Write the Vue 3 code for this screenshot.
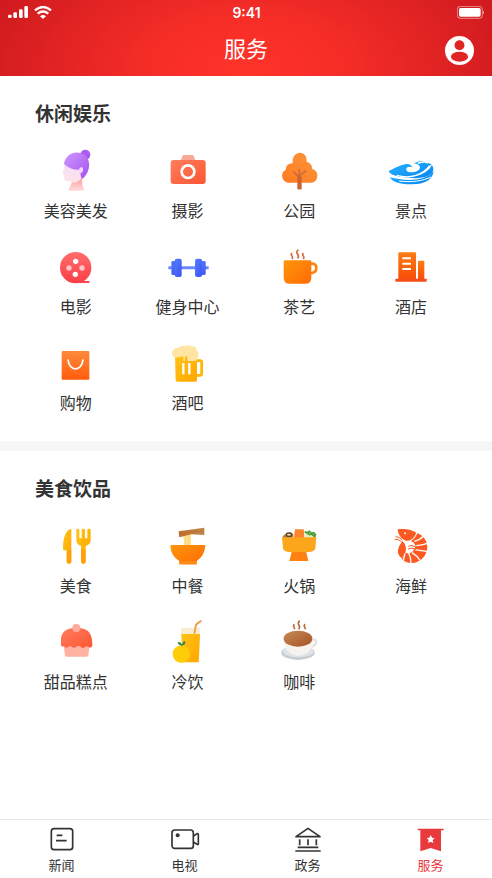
<template>
  <div class="page">
    <header class="header">
      <div class="status-bar">
        <div class="status-left">
          <svg class="signal" viewBox="0 0 60 36" aria-hidden="true">
            <rect x="0" y="26" width="11" height="10" rx="4" />
            <rect x="16" y="19" width="11" height="17" rx="4" />
            <rect x="33" y="10" width="11" height="26" rx="4" />
            <rect x="49" y="0" width="11" height="36" rx="4" />
          </svg>
          <svg class="wifi" viewBox="0 0 54 39" aria-hidden="true">
            <path d="M3 13 Q27 -7 51 13" />
            <path d="M11 23 Q27 10 43 23" />
            <path class="wifi-dot" d="M18 31 Q27 23 36 31 L27 39 Z" />
          </svg>
        </div>
        <span class="time">9:41</span>
        <svg class="battery" viewBox="0 0 84 39" aria-hidden="true">
          <rect class="battery-case" x="1" y="1" width="75" height="36" rx="9" />
          <rect x="6" y="6" width="65" height="26" rx="5" />
          <path d="M79 14 Q84 19 79 24 Z" />
        </svg>
      </div>
      <div class="title-bar">
        <h1 class="title">服务</h1>
        <button class="user-btn" type="button" aria-label="个人中心">
          <svg viewBox="0 0 88 88">
            <circle cx="44" cy="44" r="44" fill="#fff" />
            <circle cx="44" cy="28" r="15" fill="#e02524" />
            <ellipse cx="44" cy="63" rx="26" ry="15" fill="#e02524" />
          </svg>
        </button>
      </div>
    </header>

    <main class="content">
      <section v-for="section in sections" :key="section.title" class="section">
        <h2 class="section-title">{{ section.title }}</h2>
        <div class="grid">
          <a v-for="item in section.items" :key="item.name" class="item" href="#">
            <svg class="item-icon" viewBox="0 0 132 132" aria-hidden="true" v-html="icons[item.icon]"></svg>
            <span class="item-name">{{ item.name }}</span>
          </a>
        </div>
      </section>
    </main>

    <nav class="tab-bar">
      <a v-for="tab in tabs" :key="tab.name" class="tab" :class="{ active: tab.name === current }" href="#" @click.prevent="current = tab.name">
        <svg class="tab-icon" viewBox="0 0 84 84" aria-hidden="true" v-html="tab.icon"></svg>
        <span>{{ tab.name }}</span>
      </a>
    </nav>

    <!-- 图标共用渐变 -->
    <svg class="defs" width="0" height="0" aria-hidden="true">
      <defs>
        <linearGradient id="g-purple" x1="0" y1="0" x2="1" y2="1">
          <stop offset="0" stop-color="#cf98ff" />
          <stop offset="1" stop-color="#a352ee" />
        </linearGradient>
        <linearGradient id="g-skin" x1="0" y1="0" x2="0" y2="1">
          <stop offset="0" stop-color="#f4dcff" />
          <stop offset="1" stop-color="#ffe3e6" />
        </linearGradient>
        <linearGradient id="g-neck" x1="0" y1="0" x2="0" y2="1">
          <stop offset="0" stop-color="#ff9d9d" />
          <stop offset="1" stop-color="#ffdcdc" />
        </linearGradient>
        <linearGradient id="g-coral" x1="0" y1="0" x2="1" y2="1">
          <stop offset="0" stop-color="#ff7e5e" />
          <stop offset="1" stop-color="#fc5531" />
        </linearGradient>
        <linearGradient id="g-tree" x1="1" y1="0" x2="0" y2="1">
          <stop offset="0" stop-color="#fb963e" />
          <stop offset="1" stop-color="#ff7b1f" />
        </linearGradient>
        <linearGradient id="g-wave" x1="0" y1="0" x2="1" y2="1">
          <stop offset="0" stop-color="#27b6ff" />
          <stop offset="1" stop-color="#0883f1" />
        </linearGradient>
        <linearGradient id="g-red" x1="0" y1="0" x2="0" y2="1">
          <stop offset="0" stop-color="#ff6d6b" />
          <stop offset="1" stop-color="#fb3e47" />
        </linearGradient>
        <linearGradient id="g-blue" x1="0" y1="0" x2="1" y2="1">
          <stop offset="0" stop-color="#5380ff" />
          <stop offset="1" stop-color="#3f50f1" />
        </linearGradient>
        <linearGradient id="g-orange" x1="0" y1="0" x2="1" y2="1">
          <stop offset="0" stop-color="#ff960c" />
          <stop offset="1" stop-color="#ff6b05" />
        </linearGradient>
        <linearGradient id="g-hotel" x1="0" y1="0" x2="0" y2="1">
          <stop offset="0" stop-color="#ff7d12" />
          <stop offset="1" stop-color="#f84c09" />
        </linearGradient>
        <linearGradient id="g-bag" x1="0" y1="0" x2="0" y2="1">
          <stop offset="0" stop-color="#ff8a3c" />
          <stop offset="1" stop-color="#ff5c0c" />
        </linearGradient>
        <linearGradient id="g-yellow" x1="0" y1="0" x2="1" y2="1">
          <stop offset="0" stop-color="#ffc315" />
          <stop offset="1" stop-color="#ffa600" />
        </linearGradient>
        <linearGradient id="g-wood" x1="0" y1="0" x2="1" y2="0">
          <stop offset="0" stop-color="#c46a2d" />
          <stop offset="1" stop-color="#be8749" />
        </linearGradient>
        <linearGradient id="g-coffee" x1="0" y1="0" x2="1" y2="1">
          <stop offset="0" stop-color="#c78958" />
          <stop offset="1" stop-color="#a65424" />
        </linearGradient>
      </defs>
    </svg>
  </div>
</template>

<script setup>
import { ref } from 'vue';

const current = ref('服务');

const sections = [
  {
    title: '休闲娱乐',
    items: [
      { name: '美容美发', icon: 'hair' },
      { name: '摄影', icon: 'camera' },
      { name: '公园', icon: 'tree' },
      { name: '景点', icon: 'wave' },
      { name: '电影', icon: 'film' },
      { name: '健身中心', icon: 'gym' },
      { name: '茶艺', icon: 'tea' },
      { name: '酒店', icon: 'hotel' },
      { name: '购物', icon: 'bag' },
      { name: '酒吧', icon: 'beer' }
    ]
  },
  {
    title: '美食饮品',
    items: [
      { name: '美食', icon: 'cutlery' },
      { name: '中餐', icon: 'noodle' },
      { name: '火锅', icon: 'hotpot' },
      { name: '海鲜', icon: 'shrimp' },
      { name: '甜品糕点', icon: 'cake' },
      { name: '冷饮', icon: 'juice' },
      { name: '咖啡', icon: 'coffee' }
    ]
  }
];

const icons = {
  hair: `
    <path d="M54 88 Q55 106 44 120 Q40 125 48 125 Q70 128 92 123 Q82 112 85 86 Z" fill="url(#g-neck)"/>
    <path d="M34 36 Q27 46 30 57 Q30 63 25 72 Q24 76 30 77 Q28 82 31 85 Q29 98 42 97 Q52 96 58 101 Q76 98 84 86 L92 66 L70 40 Z" fill="url(#g-skin)"/>
    <circle cx="94" cy="17" r="15" fill="#ad5cf0"/>
    <path d="M30 44 C34 19 57 5 80 12 C99 18 110 38 104 59 C101 73 93 83 84 90 Q79 82 79 72 Q88 69 87 58 Q82 50 74 62 Q46 62 30 44 Z" fill="url(#g-purple)"/>
    <path d="M76 75 Q89 70 87 58 Q82 51 75 62 Z" fill="#f1d4fb"/>`,
  camera: `
    <path d="M44 36 L49 22 Q50 18 55 18 H78 Q82 18 84 22 L88 36 Z" fill="#f9aa97"/>
    <rect x="14" y="33" width="105" height="72" rx="9" fill="url(#g-coral)"/>
    <circle cx="66" cy="68" r="19" fill="none" stroke="#fff" stroke-width="8"/>`,
  tree: `
    <path d="M33 101 A21 21 0 0 1 26 62 Q28 42 47 43 C44 2 92 2 89 38 Q105 42 106 60 A21 21 0 0 1 102 101 Z" fill="url(#g-tree)"/>
    <path d="M67 121 V61 M67 85 L49 67 M68 80 L87 65" fill="none" stroke="#d0683a" stroke-width="5"/>
    <path d="M61 82 H74 V121 H61 Z" fill="#cb6433"/>`,
  wave: `
    <path d="M-1 66 C18 57 40 44 55 45 Q66 46 70 55 Q61 51 52 57 C49 72 70 73 86 65 C101 57 91 45 75 43 C100 28 135 42 133 61 C131 87 87 91 47 85 C23 82 3 78 -1 66 Z" fill="url(#g-wave)"/>
    <path d="M23 79 C65 91 102 77 122 50 M68 83 C101 78 121 60 127 48 M86 43 Q109 35 118 43" fill="none" stroke="#fff" stroke-width="4"/>
    <path d="M2 85 C48 97 108 98 134 66 C132 91 109 106 68 106 C35 107 10 99 2 85 Z" fill="url(#g-wave)"/>
    <path d="M30 96 C65 101 102 96 126 84" fill="none" stroke="#fff" stroke-width="3"/>`,
  film: `
    <path d="M64 108 H106 V114 H76 Z" fill="#fb4850"/>
    <circle cx="65" cy="68" r="47" fill="url(#g-red)"/>
    <g fill="#fff"><circle cx="65" cy="49" r="8"/><circle cx="64" cy="88" r="8"/></g>
    <g fill="#ffc5c6"><circle cx="45" cy="69" r="8"/><circle cx="84" cy="69" r="8"/></g>`,
  gym: `
    <path d="M7 64 H128 V73 H7 Z" fill="#6b89ff"/>
    <g fill="url(#g-blue)">
      <path d="M16 52 Q16 48 21 48 H28 V90 H21 Q16 90 16 86 Z"/>
      <path d="M119 52 Q119 48 114 48 H106 V90 H114 Q119 90 119 86 Z"/>
      <rect x="26" y="41" width="21" height="55" rx="6"/>
      <rect x="87" y="41" width="21" height="55" rx="6"/>
    </g>`,
  tea: `
    <path d="M100 56 H106 Q118 57 118 69 Q118 84 98 85" fill="none" stroke="#ff8310" stroke-width="8"/>
    <path d="M20 50 Q20 46 25 46 H99 Q103 46 103 50 V98 Q103 116 85 116 H38 Q20 116 20 98 Z" fill="url(#g-orange)"/>
    <path d="M45 24 Q41 29 45 33 Q48 37 45 42 M64 14 Q56 21 62 28 Q67 34 61 40 M79 24 Q75 29 79 33 Q82 37 79 42" fill="none" stroke="#d9683b" stroke-width="5"/>`,
  hotel: `
    <g fill="url(#g-hotel)">
      <path d="M28 25 Q28 22 31 22 H78 Q81 22 81 25 V104 H28 Z"/>
      <path d="M87 50 Q87 47 90 47 H103 Q106 47 106 50 V104 H87 Z"/>
    </g>
    <rect x="19" y="101" width="94" height="9" rx="2" fill="#f34e16"/>
    <path d="M40 40 H66 M40 56 H66 M40 72 H66" stroke="#fff" stroke-width="6"/>`,
  bag: `
    <rect x="23" y="30" width="83" height="86" rx="3" fill="url(#g-bag)"/>
    <path d="M42 55 C45 93 84 93 87 55" fill="none" stroke="#fff" stroke-width="5"/>`,
  beer: `
    <path d="M90 59 H103 Q107 59 107 63 V98 Q107 103 102 103 H90" fill="none" stroke="#ffb400" stroke-width="8"/>
    <path d="M27 46 H93 V116 Q93 122 87 122 H35 Q29 122 29 116 Z" fill="url(#g-yellow)"/>
    <path d="M28 50 Q14 44 20 30 Q25 19 36 22 Q45 10 57 16 Q66 9 76 16 Q92 15 92 29 Q102 36 94 51 L91 60 H64 V45 H57 V58 Q55 64 52 58 V46 Z" fill="#ffe5a1"/>
    <path d="M52 66 V100 M70 66 V100" stroke="#fff" stroke-width="7"/>`,
  cutlery: `
    <path d="M52 14 V113 Q52 119 45 119 Q38 119 38 113 V79 H31 Q27 79 27 74 C27 40 35 18 52 14 Z" fill="url(#g-yellow)"/>
    <path d="M67 18 Q67 14 72 14 Q76 14 76 18 V43 H83 V18 Q83 14 88 14 Q93 14 93 18 V43 H100 V18 Q100 14 105 14 Q110 14 110 18 V47 Q110 61 95 66 V113 Q95 119 88 119 Q81 119 81 113 V66 Q67 61 67 47 Z" fill="url(#g-yellow)"/>
    <path d="M38 79 H52 V113 Q52 119 45 119 Q38 119 38 113 Z M81 77 H95 V113 Q95 119 88 119 Q81 119 81 113 Z" fill="#ff9811" opacity="0.6"/>`,
  noodle: `
    <path d="M50 29 H75 V65 H54 Q55 47 50 29 Z" fill="#ffe293"/>
    <path d="M59 32 V63 M68 32 V63" stroke="#f4c967" stroke-width="2"/>
    <path d="M38 22 L115 11 V33 L76 31 L40 40 Z" fill="url(#g-wood)"/>
    <path d="M38 29 L115 20" stroke="#b86d37" stroke-width="2"/>
    <path d="M13 66 Q13 63 17 63 H114 Q118 63 118 66 Q115 97 92 111 V121 H40 V111 Q15 97 13 66 Z" fill="url(#g-orange)"/>
    <path d="M40 111 H92 V121 H40 Z" fill="#ff8d13"/>`,
  hotpot: `
    <path d="M54 16 H80 L83 47 H50 Z" fill="#ff842b"/>
    <path d="M81 40 L84 22 Q95 18 104 25 Q116 25 118 43 Z" fill="#e8ebbd"/>
    <path d="M83 23 l8 4 6 -5 6 6 7 -2 7 8 M91 28 l7 4 6 -2 11 9" fill="none" stroke="#449b36" stroke-width="5"/>
    <path d="M16 41 Q20 28 31 30 Q40 21 49 31 V43 H16 Z" fill="#a88051"/>
    <ellipse cx="36" cy="32" rx="8" ry="5" fill="#ead5b5" stroke="#604020" stroke-width="4"/>
    <path d="M45 80 H87 L94 111 H37 Z" fill="#ff8111"/>
    <path d="M15 40 H118 L115 73 Q113 83 98 84 H34 Q20 83 18 73 Z" fill="#fba61b"/>`,
  shrimp: `
    <path d="M26 16 C46 13 64 15 82 26 C76 42 66 51 50 50 C41 47 28 37 26 16 Z" fill="#fb5921"/>
    <path d="M86 28 C104 35 113 50 115 68 C114 94 96 116 68 117 C54 117 44 111 38 104 L48 86 Q62 91 72 82 L80 68 Q78 56 66 52 Q78 44 86 28 Z" fill="#fb5921"/>
    <path d="M40 51 C51 61 53 76 49 86 L38 103 Q24 91 27 78 Q29 66 40 51 Z" fill="#fb5921"/>
    <path d="M76 52 Q94 47 104 36 M82 65 Q100 63 115 58 M78 77 Q97 80 114 82 M69 86 Q84 95 93 109 M59 87 Q66 101 66 118 M48 88 Q45 99 43 110" fill="none" stroke="#fff" stroke-width="4"/>
    <path d="M58 67 Q68 61 82 70 M57 75 Q69 69 81 76" fill="none" stroke="#fb5921" stroke-width="3"/>
    <path d="M40 48 Q31 38 20 38 M37 53 Q28 44 17 46" fill="none" stroke="#fb5921" stroke-width="3"/>
    <circle cx="48" cy="28" r="3" fill="#fff"/>`,
  cake: `
    <path d="M29 75 H107 L103 106 Q102 110 98 110 H38 Q34 110 33 106 Z" fill="#ffb1a2"/>
    <path d="M21 61 C20 38 36 26 55 25 H81 C103 28 116 41 115 78 Q110 86 103 80 Q96 76 92 82 Q84 87 79 79 Q73 74 66 81 Q58 86 53 80 Q47 75 42 82 Q34 86 30 79 Q21 82 21 74 Z" fill="url(#g-coral)"/>
    <circle cx="67" cy="24" r="12" fill="#ffab9b"/>`,
  juice: `
    <path d="M45 23 H103 L99 127 H50 Z" fill="#faeed0"/>
    <path d="M46 42 H102 L98 127 H50 Z" fill="url(#g-yellow)"/>
    <path d="M85 41 L90 14 L106 2" fill="none" stroke="#e9a64e" stroke-width="6"/>
    <circle cx="46" cy="102" r="26" fill="#ffcd08"/>
    <path d="M47 77 Q35 75 35 66 Q44 65 48 73 Q52 62 57 63 Q62 74 47 77 Z" fill="#378b49"/>`,
  coffee: `
    <ellipse cx="63" cy="98" rx="50" ry="22" fill="#c7cdd2"/>
    <ellipse cx="64" cy="94" rx="46" ry="18" fill="#e0e4e6"/>
    <path d="M98 61 Q118 54 117 68 Q115 80 94 82" fill="none" stroke="#dfe0df" stroke-width="7"/>
    <path d="M18 55 C18 24 106 23 108 55 C111 84 94 107 64 107 C36 107 21 85 18 55 Z" fill="#f6f2ed"/>
    <ellipse cx="63" cy="56" rx="43" ry="24" fill="url(#g-coffee)"/>
    <path d="M52 12 Q48 17 51 21 Q54 24 51 28 M68 2 Q61 9 66 16 Q70 21 65 28 M84 12 Q80 17 83 21 Q86 24 83 28" fill="none" stroke="#b76f40" stroke-width="5"/>`
};

const tabs = [
  {
    name: '新闻',
    icon: `
      <rect x="10" y="11" width="64" height="63" rx="8" fill="none" stroke="currentColor" stroke-width="5"/>
      <path d="M26 31 H43 M24 47 H56" stroke="currentColor" stroke-width="5"/>`
  },
  {
    name: '电视',
    icon: `
      <rect x="3" y="15" width="64" height="55" rx="8" fill="none" stroke="currentColor" stroke-width="5"/>
      <path d="M68 33 L78 26 Q82 25 82 29 V56 Q82 60 78 58 L68 52" fill="none" stroke="currentColor" stroke-width="5"/>
      <circle cx="20" cy="31" r="6" fill="currentColor"/>`
  },
  {
    name: '政务',
    icon: `
      <path d="M6 35 L42 10 L78 35 Z" fill="none" stroke="currentColor" stroke-width="5" stroke-linejoin="round"/>
      <path d="M17 43 V61 M42 43 V61 M67 43 V61 M11 67 H73 M4 78 H80" stroke="currentColor" stroke-width="5"/>`
  },
  {
    name: '服务',
    icon: `
      <path d="M2 11 H80 V16 H72 V79 L41 69 L10 79 V16 H2 Z" fill="currentColor"/>
      <path d="M41 30 L45 38 L53 39 L47 45 L49 54 L41 50 L33 54 L35 45 L29 39 L37 38 Z" fill="#fff"/>`
  }
];
</script>

<style>
body {
  margin: 0;
  background: #fff;
}
</style>

<style scoped>
.page {
  display: flex;
  flex-direction: column;
  min-height: 100vh;
  font-family: "Liberation Sans", "Noto Sans CJK SC", sans-serif;
  color: #333;
  background: #fff;
}

.header {
  color: #fff;
  background: radial-gradient(ellipse 56% 200% at 50% 90%, #ff332a 0%, #f52d27 35%, #cf1a1f 100%);
}

.status-bar {
  display: grid;
  grid-template-columns: 1fr auto 1fr;
  align-items: center;
  height: 24px;
  padding: 0 7px 0 8px;
}

.status-bar svg {
  fill: #fff;
}

.status-left {
  display: flex;
  align-items: center;
  gap: 6px;
}

.signal {
  width: 20px;
  height: 12px;
}

.wifi {
  width: 18px;
  height: 13px;
}

.status-bar .wifi path {
  fill: none;
  stroke: #fff;
  stroke-width: 7;
}

.status-bar .wifi .wifi-dot {
  fill: #fff;
  stroke: none;
}

.time {
  font-family: Inter, "Liberation Sans", sans-serif;
  font-size: 14px;
  font-weight: 600;
}

.battery {
  justify-self: end;
  width: 28px;
  height: 13px;
}

.status-bar .battery-case {
  fill: none;
  stroke: rgba(255, 255, 255, 0.5);
  stroke-width: 3;
}

.title-bar {
  display: grid;
  grid-template-columns: 1fr auto 1fr;
  align-items: center;
  height: 52px;
  padding: 0 18px;
}

.title {
  grid-column: 2;
  margin: 0;
  font-size: 22px;
  font-weight: 400;
  line-height: 32px;
}

.user-btn {
  justify-self: end;
  width: 29px;
  height: 29px;
  padding: 0;
  border: none;
  background: transparent;
  cursor: pointer;
}

.user-btn svg {
  display: block;
  width: 100%;
}

.content {
  flex: 1;
}

.section {
  padding: 25px 25px 25px 20px;
}

.section + .section {
  border-top: 10px solid #f6f6f6;
}

.section-title {
  margin: 0 0 20px 15px;
  font-size: 19px;
  font-weight: 700;
  line-height: 28px;
}

.grid {
  display: grid;
  grid-template-columns: repeat(4, 1fr);
  row-gap: 21px;
}

.item {
  display: flex;
  flex-direction: column;
  align-items: center;
  gap: 7px;
  color: inherit;
  text-decoration: none;
}

.item-icon {
  width: 44px;
  height: 44px;
  overflow: visible;
}

.item-name {
  font-size: 16px;
  line-height: 24px;
}

.tab-bar {
  display: flex;
  position: sticky;
  bottom: 0;
  border-top: 1px solid #e9e9e9;
  background: #fff;
}

.tab {
  flex: 1;
  display: flex;
  flex-direction: column;
  align-items: center;
  gap: 3px;
  padding: 5px 0 2px;
  color: #333;
  font-size: 13px;
  line-height: 20px;
  text-decoration: none;
}

.tab.active {
  color: #e8393d;
}

.tab-icon {
  width: 28px;
  height: 28px;
  overflow: visible;
}

.defs {
  position: absolute;
}
</style>
